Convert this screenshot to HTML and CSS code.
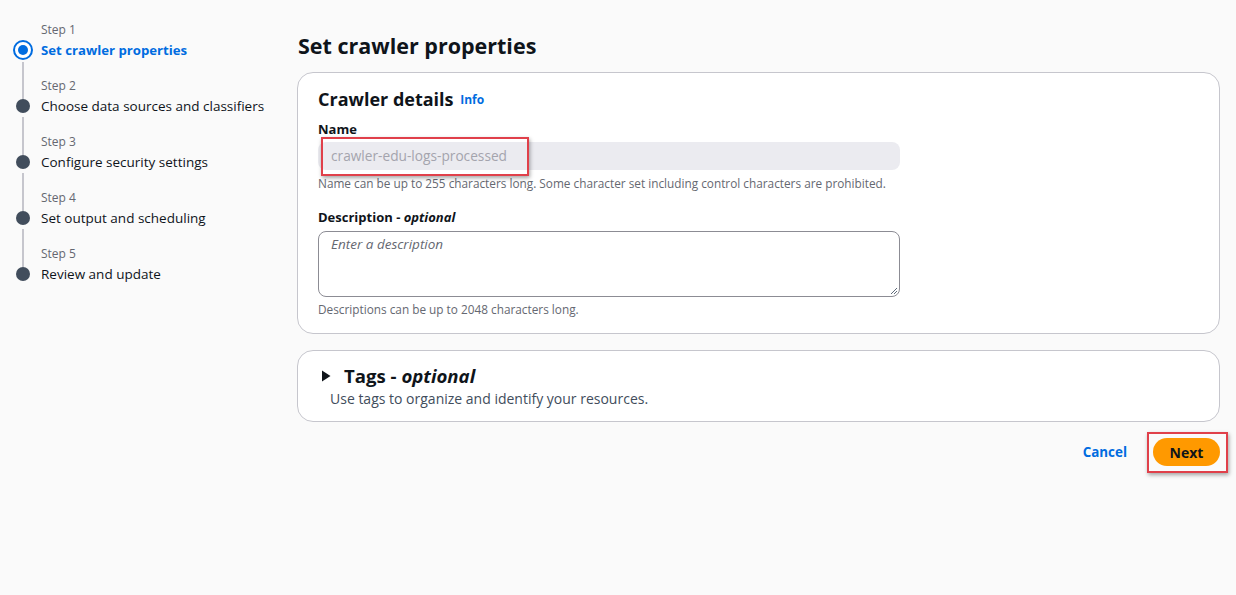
FILE: index.html
```html
<!DOCTYPE html>
<html>
<head>
<meta charset="utf-8">
<link rel="stylesheet" href="styles.css">
</head>
<body>
<div class="page">
  <nav class="steps">
    <div class="step active">
      <div class="rail"><span class="dot"></span><span class="line"></span></div>
      <div class="txt"><div class="num">Step 1</div><div class="title">Set crawler properties</div></div>
    </div>
    <div class="step">
      <div class="rail"><span class="dot"></span><span class="line"></span></div>
      <div class="txt"><div class="num">Step 2</div><div class="title">Choose data sources and classifiers</div></div>
    </div>
    <div class="step">
      <div class="rail"><span class="dot"></span><span class="line"></span></div>
      <div class="txt"><div class="num">Step 3</div><div class="title">Configure security settings</div></div>
    </div>
    <div class="step">
      <div class="rail"><span class="dot"></span><span class="line"></span></div>
      <div class="txt"><div class="num">Step 4</div><div class="title">Set output and scheduling</div></div>
    </div>
    <div class="step last">
      <div class="rail"><span class="dot"></span></div>
      <div class="txt"><div class="num">Step 5</div><div class="title">Review and update</div></div>
    </div>
  </nav>
  <main class="main">
    <h1 class="h1">Set crawler properties</h1>
    <section class="card details">
      <h2 class="h2">Crawler details <a class="info">Info</a></h2>
      <div class="field">
        <label class="label">Name</label>
        <div class="input-wrap">
          <div class="input disabled">crawler-edu-logs-processed</div>
          <span class="hl hl-name"></span>
        </div>
        <div class="hint">Name can be up to 255 characters long. Some character set including control characters are prohibited.</div>
      </div>
      <div class="field">
        <label class="label">Description - <i>optional</i></label>
        <div class="textarea">Enter a description
          <svg class="grip" width="8" height="8" viewBox="0 0 8 8"><path d="M7 1L1 7M7 4L4 7" stroke="#5f6b7a" stroke-width="1"/></svg>
        </div>
        <div class="hint">Descriptions can be up to 2048 characters long.</div>
      </div>
    </section>
    <section class="card tags">
      <div class="tags-head">
        <svg class="caret" width="10" height="12" viewBox="0 0 10 12"><path d="M1 0.5L9.5 6L1 11.5Z" fill="#0f141a"/></svg>
        <h2 class="h2">Tags - <i>optional</i></h2>
      </div>
      <div class="desc">Use tags to organize and identify your resources.</div>
    </section>
    <div class="actions">
      <a class="cancel">Cancel</a>
      <div class="next-wrap">
        <button class="next">Next</button>
        <span class="hl hl-next"></span>
      </div>
    </div>
  </main>
</div>
</body>
</html>
```
FILE: styles.css
```css
* { box-sizing: border-box; }
html, body { margin: 0; padding: 0; }
body {
  background: #fafafa;
  font-family: "Open Sans", "Liberation Sans", sans-serif;
  color: #0f141a;
  width: 1236px;
  height: 595px;
  overflow: hidden;
}
.page {
  display: flex;
  padding-top: 21px;
}
.steps {
  width: 297px;
  flex: none;
  padding-left: 14px;
}
.step {
  display: flex;
  height: 56px;
}
.rail {
  width: 27px;
  flex: none;
  position: relative;
}
.rail .dot {
  position: absolute;
  left: 2px;
  top: 22px;
  width: 14px;
  height: 14px;
  border-radius: 50%;
  background: #414d5c;
}
.rail .line {
  position: absolute;
  left: 8px;
  width: 2px;
  background: #c6c6cd;
  top: 40px;
  bottom: -22px;
}
.step.active .dot {
  left: -1px;
  top: 19px;
  width: 20px;
  height: 20px;
  background: #fff;
  border: 2px solid #006ce0;
}
.step.active .dot::after {
  content: "";
  position: absolute;
  left: 3px;
  top: 3px;
  width: 10px;
  height: 10px;
  border-radius: 50%;
  background: #006ce0;
}
.step.active .line { top: 41px; }
.txt { padding-top: 1px; }
.num {
  font-size: 12px;
  line-height: 16px;
  color: #656871;
}
.title {
  font-size: 13.5px;
  line-height: 24px;
  margin-top: 0;
  color: #0f141a;
}
.step.active .title {
  color: #006ce0;
  font-weight: 700;
  font-size: 13.2px;
}
.main {
  width: 923px;
  flex: none;
}
.h1 {
  margin: 9px 0 10px 1px;
  font-size: 21.5px;
  line-height: 32px;
  font-weight: 700;
}
.card {
  background: #fff;
  border: 1px solid #c6c6cd;
  border-radius: 16px;
}
.details {
  height: 262px;
  padding: 13px 20px 0 20px;
}
.h2 {
  margin: 0;
  font-size: 18px;
  line-height: 26px;
  font-weight: 700;
}
.info {
  font-size: 12px;
  font-weight: 700;
  color: #006ce0;
  margin-left: 2px;
  vertical-align: 2px;
}
.field { margin-top: 6px; }
.field + .field { margin-top: 16px; }
.label {
  display: block;
  font-size: 13px;
  line-height: 20px;
  font-weight: 700;
}
.label i { font-weight: 700; }
.input-wrap {
  position: relative;
  margin-top: 3px;
  width: 582px;
}
.input {
  height: 28px;
  border-radius: 8px;
  background: #ebebf0;
  color: #a4a4ad;
  font-size: 13.7px;
  line-height: 28px;
  padding-left: 13px;
}
.hl {
  position: absolute;
  border: 2px solid #e0404a;
  box-shadow: 1px 2px 4px rgba(0,0,0,0.35);
  pointer-events: none;
}
.hl-name {
  left: 3px;
  top: -5px;
  width: 208px;
  height: 39px;
}
.hint {
  font-size: 11.8px;
  line-height: 16px;
  color: #656871;
  margin-top: 5px;
}
.textarea {
  position: relative;
  margin-top: 4px;
  width: 582px;
  height: 66px;
  border: 1px solid #8c8c94;
  border-radius: 8px;
  background: #fff;
  font-size: 13.5px;
  font-style: italic;
  color: #656871;
  padding: 2px 12px;
  line-height: 20px;
}
.textarea + .hint { margin-top: 4px; }
.grip {
  position: absolute;
  right: 1px;
  bottom: 1px;
}
.tags {
  margin-top: 16px;
  height: 72px;
  padding: 12px 0 0 23px;
}
.tags-head {
  display: flex;
  align-items: center;
}
.caret { margin-right: 13px; flex: none; }
.tags .h2 { font-size: 18.6px; line-height: 26px; }
.desc {
  font-size: 14px;
  line-height: 20px;
  color: #414d5c;
  margin-left: 9px;
}
.actions {
  display: flex;
  justify-content: flex-end;
  align-items: center;
  margin-top: 16px;
  gap: 26px;
}
.cancel {
  font-size: 13.4px;
  font-weight: 700;
  color: #006ce0;
}
.next-wrap { position: relative; }
.next {
  display: block;
  width: 67px;
  height: 28px;
  border: none;
  border-radius: 20px;
  background: #ff9900;
  color: #0f141a;
  font-family: inherit;
  font-size: 14px;
  font-weight: 700;
  padding: 0;
}
.hl-next {
  left: -6px;
  top: -6px;
  width: 81px;
  height: 41px;
}
```
